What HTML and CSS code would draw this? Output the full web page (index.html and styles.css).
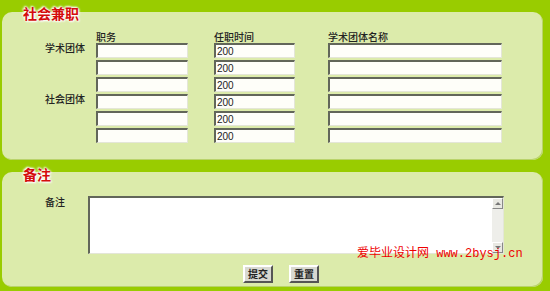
FILE: index.html
```html
<!DOCTYPE html>
<html lang="zh-CN">
<head>
    <meta charset="UTF-8" />
    <title>社会兼职</title>
    <link rel="stylesheet" href="styles.css">
</head>
<body>
    <section class="panel panel-jobs">
        <h2 class="panel-title">社会兼职</h2>
        <div class="jobs-grid">
            <span></span>
            <span class="col-head">职务</span>
            <span class="col-head">任职时间</span>
            <span class="col-head">学术团体名称</span>

            <span class="row-label">学术团体</span>
            <span><input class="field field-duty" type="text"></span>
            <span><input class="field field-time" type="text" value="200"></span>
            <span><input class="field field-org" type="text"></span>

            <span></span>
            <span><input class="field field-duty" type="text"></span>
            <span><input class="field field-time" type="text" value="200"></span>
            <span><input class="field field-org" type="text"></span>

            <span></span>
            <span><input class="field field-duty" type="text"></span>
            <span><input class="field field-time" type="text" value="200"></span>
            <span><input class="field field-org" type="text"></span>

            <span class="row-label">社会团体</span>
            <span><input class="field field-duty" type="text"></span>
            <span><input class="field field-time" type="text" value="200"></span>
            <span><input class="field field-org" type="text"></span>

            <span></span>
            <span><input class="field field-duty" type="text"></span>
            <span><input class="field field-time" type="text" value="200"></span>
            <span><input class="field field-org" type="text"></span>

            <span></span>
            <span><input class="field field-duty" type="text"></span>
            <span><input class="field field-time" type="text" value="200"></span>
            <span><input class="field field-org" type="text"></span>
        </div>
    </section>

    <section class="panel panel-note">
        <h2 class="panel-title">备注</h2>
        <div class="note-row">
            <span class="row-label">备注</span>
            <div class="note-box">
                <textarea class="note-text"></textarea>
                <div class="scrollbar">
                    <span class="scroll-btn scroll-up"></span>
                    <span class="scroll-track"></span>
                    <span class="scroll-btn scroll-down"></span>
                </div>
            </div>
        </div>
        <div class="actions">
            <button type="submit" class="btn">提交</button>
            <button type="reset" class="btn">重置</button>
        </div>
        <div class="watermark">爱毕业设计网 www.2bysj.cn</div>
    </section>
</body>
</html>
```

FILE: styles.css
```css
body {
    margin: 0;
    padding: 12px 7px 4px 2px;
    background-color: #99cc00;
    font-family: 'Liberation Sans', 'Noto Sans CJK SC', sans-serif;
    font-size: 10px;
    color: #222;
}

.panel {
    position: relative;
    background-color: #dcebab;
    border-radius: 10px;
    box-shadow: inset -1px -1px 0 #b9d36a;
}

.panel-jobs {
    height: 148px;
}

.panel-note {
    height: 115px;
    margin-top: 12px;
}

.panel-title {
    margin: 0 0 0 21px;
    font-family: 'Noto Sans CJK SC', sans-serif;
    font-size: 14px;
    line-height: 16px;
    font-weight: bold;
    color: #d40c0c;
    text-shadow: 0 0 2px #fff, 0 0 3px #fff, 1px 1px 2px #fff, -1px -1px 2px #fff;
}

.panel-jobs .panel-title {
    position: relative;
    top: -7px;
    margin-bottom: -7px;
}

.panel-note .panel-title {
    position: relative;
    top: -6px;
    margin-bottom: -6px;
}

.jobs-grid {
    display: grid;
    grid-template-columns: 94px 118px 114px 174px;
    grid-template-rows: 12px;
    grid-auto-rows: 17px;
    margin-top: 10px;
}

.col-head {
    font-family: 'Noto Sans CJK SC', sans-serif;
    line-height: 12px;
    font-weight: 500;
}

.row-label {
    padding-left: 43px;
    font-family: 'Noto Sans CJK SC', sans-serif;
    line-height: 10px;
    font-weight: 500;
}

.field {
    display: block;
    box-sizing: border-box;
    height: 15px;
    margin: 0;
    padding: 0 1px;
    background-color: #fefef9;
    border-style: solid;
    border-width: 2px 1px 1px 2px;
    border-color: #62665a #e4e6d8 #e4e6d8 #62665a;
    font-family: 'Liberation Sans', sans-serif;
    font-size: 10px;
    color: #222;
    outline: none;
}

.field-duty {
    width: 92px;
}

.field-time {
    width: 81px;
}

.field-org {
    width: 174px;
}

.note-row {
    display: flex;
    margin-top: 14px;
}

.note-row .row-label {
    width: 43px;
    padding-top: 1px;
}

.note-box {
    display: flex;
    box-sizing: border-box;
    width: 416px;
    height: 58px;
    background-color: #fff;
    border-style: solid;
    border-width: 2px 1px 1px 2px;
    border-color: #62665a #e4e6d8 #e4e6d8 #62665a;
}

.note-text {
    flex: 1;
    margin: 0;
    padding: 2px;
    border: none;
    resize: none;
    outline: none;
    font-size: 10px;
}

.scrollbar {
    display: flex;
    flex-direction: column;
    width: 11px;
    background-color: #eeeeea;
}

.scroll-btn {
    display: flex;
    align-items: center;
    justify-content: center;
    box-sizing: border-box;
    height: 11px;
    background-color: #e8e8e2;
    border: 1px solid;
    border-color: #fff #888 #888 #fff;
}

.scroll-btn::before {
    content: "";
    border-left: 3px solid transparent;
    border-right: 3px solid transparent;
}

.scroll-up::before {
    border-bottom: 3px solid #777;
}

.scroll-down::before {
    border-top: 3px solid #777;
}

.scroll-track {
    flex: 1;
}

.actions {
    display: flex;
    gap: 16px;
    margin: 11px 0 0 241px;
}

.btn {
    box-sizing: border-box;
    height: 18px;
    padding: 0 3px;
    background-color: #d8d8d0;
    border: 2px solid;
    border-color: #fff #555 #555 #fff;
    font-family: 'Noto Sans CJK SC', sans-serif;
    font-size: 10px;
    font-weight: bold;
    line-height: 12px;
    color: #222;
}

.watermark {
    position: absolute;
    left: 355px;
    top: 75px;
    font-family: 'Liberation Mono', 'Noto Sans CJK SC', monospace;
    font-size: 12px;
    line-height: 14px;
    color: #ee0000;
}
```
